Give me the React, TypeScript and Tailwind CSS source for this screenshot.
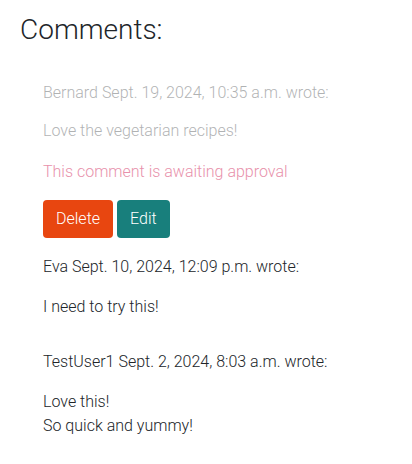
export default function App() {
  const comments = [
    { author: 'Eva', date: 'Sept. 10, 2024, 12:09 p.m.', body: ['I need to try this!'] },
    { author: 'TestUser1', date: 'Sept. 2, 2024, 8:03 a.m.', body: ['Love this!', 'So quick and yummy!'] },
  ];

  return (
    <div className="w-[412px] h-[464px] bg-white text-[#212529] font-light" style={{ fontFamily: 'Roboto, sans-serif' }}>
      <div className="px-5 pt-[13px]">
        <h3 className="text-[28px] leading-[34px] font-light">Comments:</h3>
        <div className="px-[23px] pt-[34px] text-base">
          <div className="opacity-35">
            <p className="leading-6">Bernard Sept. 19, 2024, 10:35 a.m. wrote:</p>
            <p className="leading-6 mt-[14px]">Love the vegetarian recipes!</p>
          </div>
          <p className="leading-6 mt-[17px] text-[#e891ab]">This comment is awaiting approval</p>
          <div className="flex gap-1 mt-[16px]">
            <button className="h-[38px] px-[13px] rounded bg-[#e84610] text-white text-base font-light">Delete</button>
            <button className="h-[38px] px-[13px] rounded bg-[#187f7c] text-white text-base font-light">Edit</button>
          </div>
          {comments.map((c, i) => (
            <div key={i} className={i === 0 ? 'mt-[17px]' : 'mt-[31px]'}>
              <p className="leading-6">{c.author} {c.date} wrote:</p>
              <p className="leading-6 mt-[16px]">
                {c.body.map((line, j) => (
                  <span key={j}>
                    {line}
                    {j < c.body.length - 1 && <br />}
                  </span>
                ))}
              </p>
            </div>
          ))}
        </div>
      </div>
    </div>
  );
}
